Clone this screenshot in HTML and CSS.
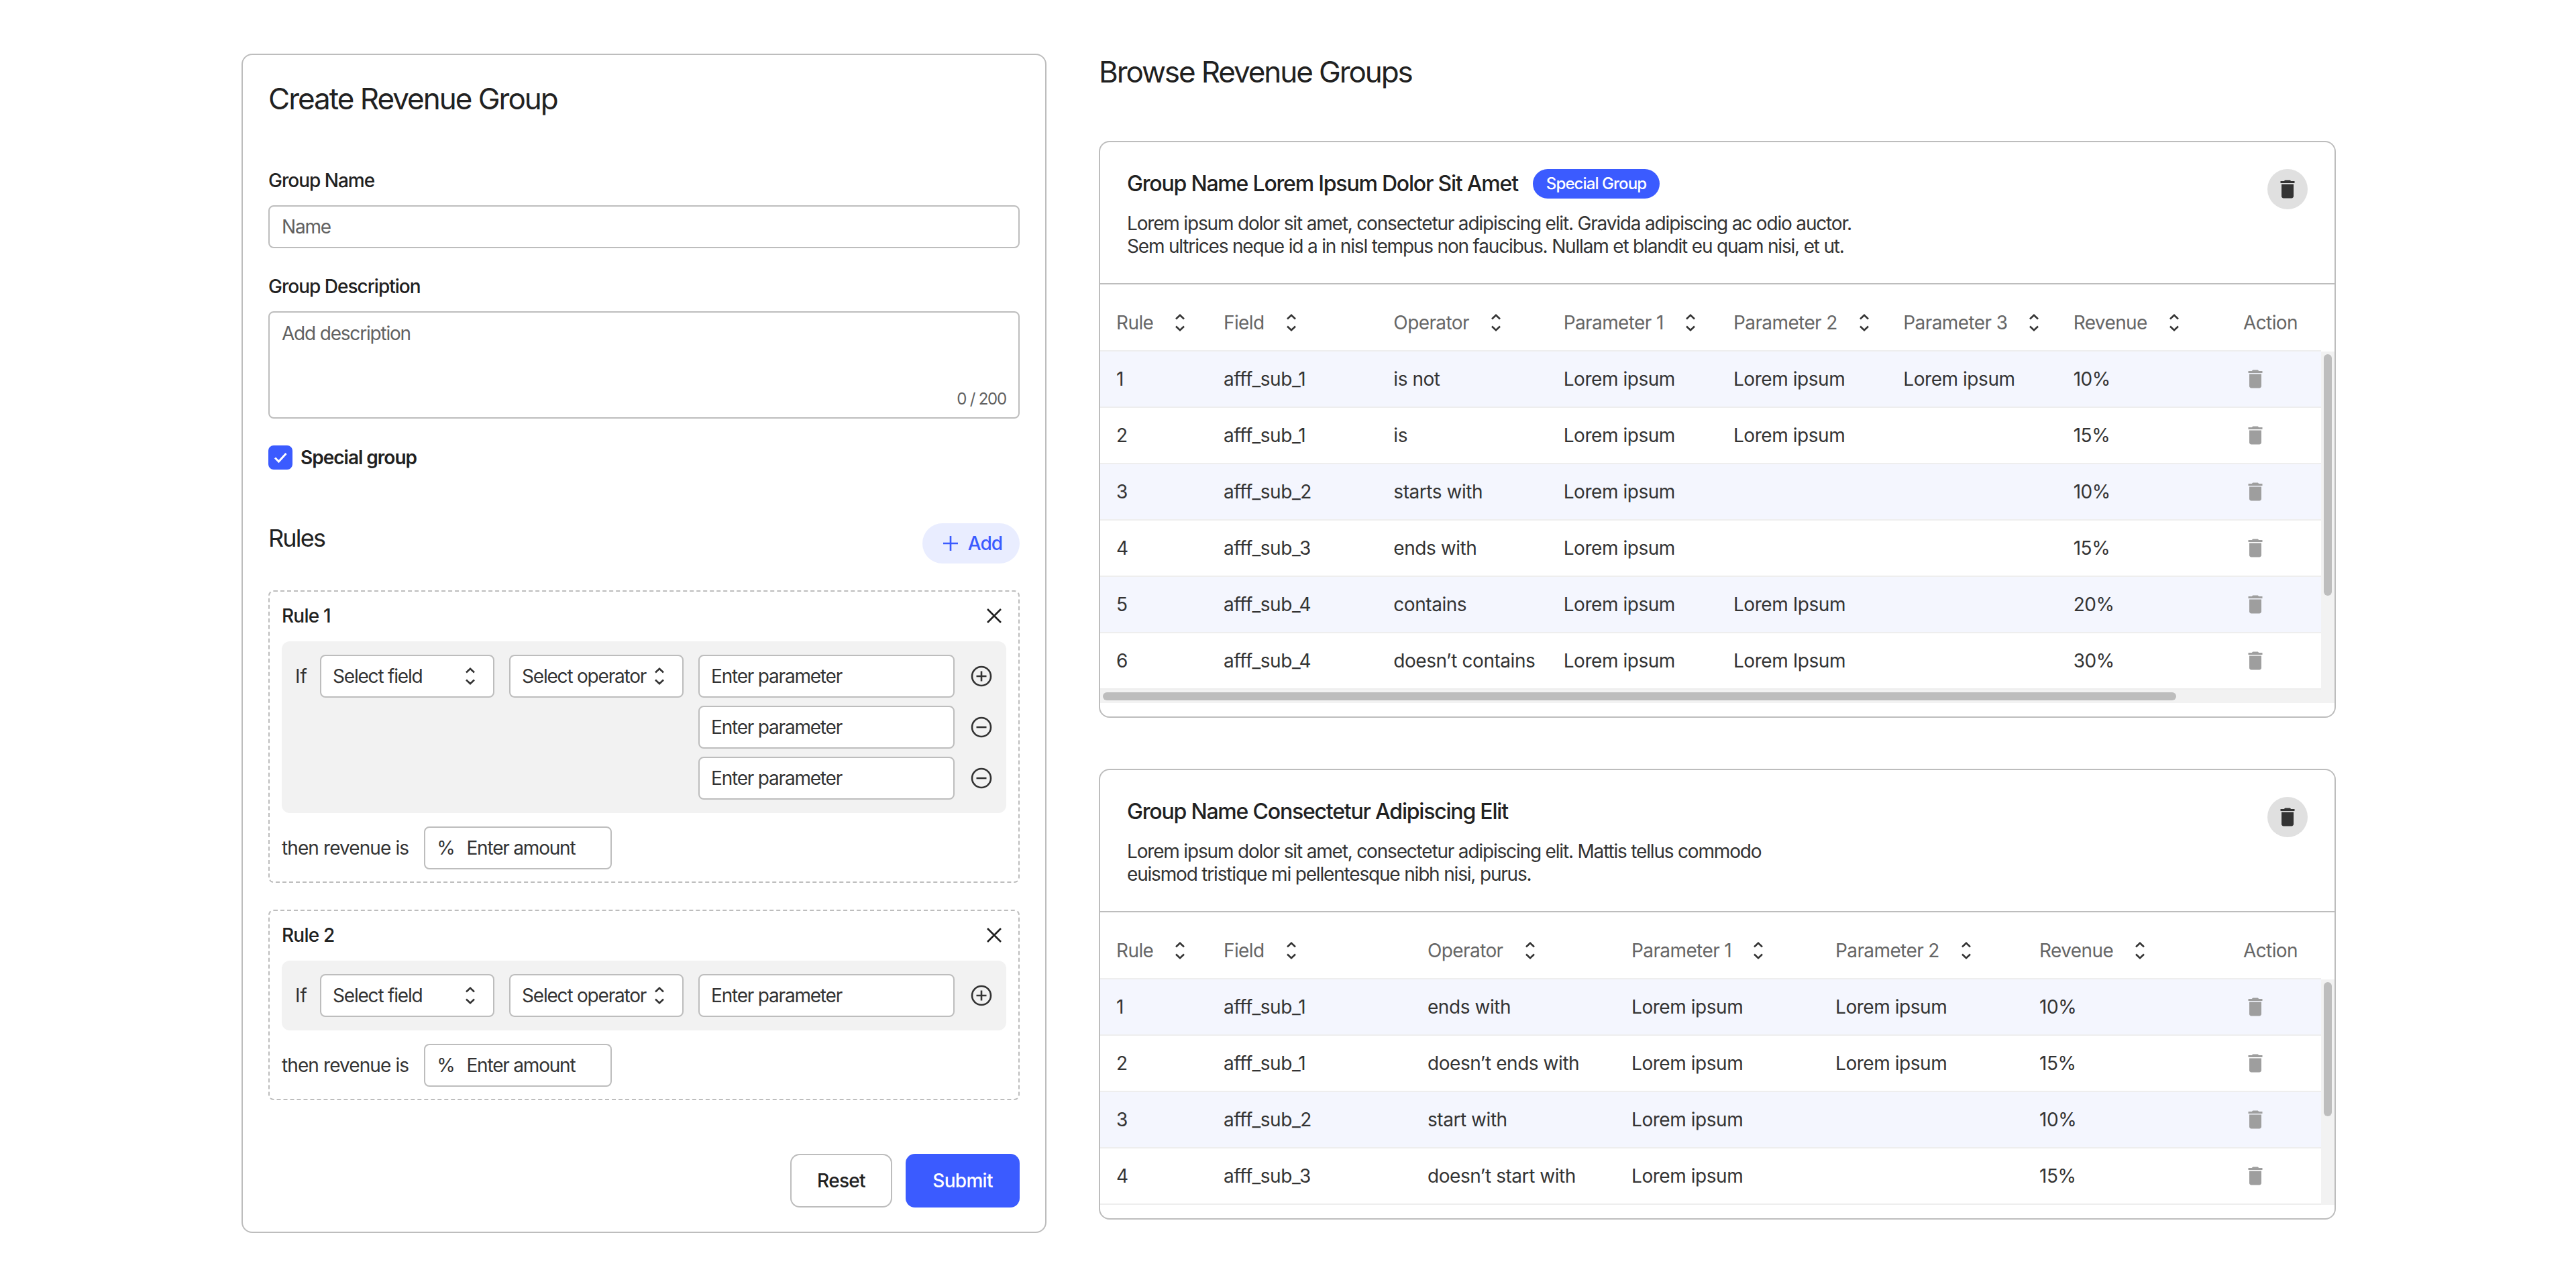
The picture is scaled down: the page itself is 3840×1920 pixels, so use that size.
FILE: index.html
```html
<!DOCTYPE html>
<html lang="en">
<head>
  <meta charset="UTF-8">
  <title>Revenue Groups</title>
  <link rel="stylesheet" href="styles.css">
</head>
<body>
<svg class="defs" width="0" height="0">
  <symbol id="sort" viewBox="0 0 32 32"><path d="M10 10.500 16 4.800l6 5.700M10 21.500 16 27.200l6-5.700" fill="none" stroke="currentColor" stroke-width="2.600"/></symbol>
  <symbol id="trash" viewBox="0 0 24 24"><path d="M6 19c0 1.100.9 2 2 2h8c1.100 0 2-.9 2-2V7H6v12zM19 4h-3.500l-1-1h-5l-1 1H5v2h14V4z" fill="currentColor"/></symbol>
  <symbol id="close" viewBox="0 0 36 36"><path d="M8 8l20 20M28 8 8 28" fill="none" stroke="currentColor" stroke-width="2.600"/></symbol>
  <symbol id="plus-circle" viewBox="0 0 36 36"><circle cx="18" cy="18" r="14" fill="none" stroke="currentColor" stroke-width="2.600"/><path d="M18 10.500v15M10.500 18h15" fill="none" stroke="currentColor" stroke-width="2.600"/></symbol>
  <symbol id="minus-circle" viewBox="0 0 36 36"><circle cx="18" cy="18" r="14" fill="none" stroke="currentColor" stroke-width="2.600"/><path d="M10.500 18h15" fill="none" stroke="currentColor" stroke-width="2.600"/></symbol>
</svg>

<div class="page">
  <!-- left: create form -->
  <form class="create-card">
    <h1 class="create-title">Create Revenue Group</h1>

    <div class="label">Group Name</div>
    <div class="field field-name">Name</div>

    <div class="label">Group Description</div>
    <div class="field field-area">
      <div>Add description</div>
      <div class="counter">0 / 200</div>
    </div>

    <div class="check-row">
      <span class="checkbox"><svg width="36" height="36" viewBox="0 0 36 36"><path d="M10 18.500l5.500 5.500L26.500 12" fill="none" stroke="#fff" stroke-width="3"/></svg></span>
      <span class="check-label">Special group</span>
    </div>

    <div class="rules-head">
      <h2 class="rules-title">Rules</h2>
      <div class="add-btn">
        <svg width="36" height="36" viewBox="0 0 36 36"><path d="M18 7v22M7 18h22" fill="none" stroke="currentColor" stroke-width="2.600"/></svg>
        <span>Add</span>
      </div>
    </div>

    <div class="rule">
      <div class="rule-head">
        <span class="rule-name">Rule 1</span>
        <svg class="rule-close" width="36" height="36"><use href="#close"/></svg>
      </div>
      <div class="rule-panel">
        <span>If</span>
        <div class="field select">Select field<svg width="32" height="32"><use href="#sort"/></svg></div>
        <div class="field select">Select operator<svg width="32" height="32"><use href="#sort"/></svg></div>
        <div class="field">Enter parameter</div>
        <svg class="round-icon" width="36" height="36"><use href="#plus-circle"/></svg>
        <div class="field param-col">Enter parameter</div>
        <svg class="round-icon" width="36" height="36"><use href="#minus-circle"/></svg>
        <div class="field param-col">Enter parameter</div>
        <svg class="round-icon" width="36" height="36"><use href="#minus-circle"/></svg>
      </div>
      <div class="revenue-row">
        <span class="revenue-label">then revenue is</span>
        <div class="field amount"><span>%</span><span>Enter amount</span></div>
      </div>
    </div>

    <div class="rule">
      <div class="rule-head">
        <span class="rule-name">Rule 2</span>
        <svg class="rule-close" width="36" height="36"><use href="#close"/></svg>
      </div>
      <div class="rule-panel">
        <span>If</span>
        <div class="field select">Select field<svg width="32" height="32"><use href="#sort"/></svg></div>
        <div class="field select">Select operator<svg width="32" height="32"><use href="#sort"/></svg></div>
        <div class="field">Enter parameter</div>
        <svg class="round-icon" width="36" height="36"><use href="#plus-circle"/></svg>
      </div>
      <div class="revenue-row">
        <span class="revenue-label">then revenue is</span>
        <div class="field amount"><span>%</span><span>Enter amount</span></div>
      </div>
    </div>

    <div class="form-actions">
      <div class="btn btn-reset">Reset</div>
      <div class="btn btn-submit">Submit</div>
    </div>
  </form>

  <!-- right: browse list -->
  <div class="browse">
    <h1 class="browse-title">Browse Revenue Groups</h1>

    <div class="group-card">
      <div class="group-head">
        <div>
          <div class="group-name-row">
            <span class="group-name">Group Name Lorem Ipsum Dolor Sit Amet</span>
            <span class="badge">Special Group</span>
          </div>
          <p class="group-desc">Lorem ipsum dolor sit amet, consectetur adipiscing elit. Gravida adipiscing ac odio auctor.<br>Sem ultrices neque id a in nisl tempus non faucibus. Nullam et blandit eu quam nisi, et ut.</p>
        </div>
        <div class="head-trash"><svg width="36" height="36"><use href="#trash"/></svg></div>
      </div>
      <div class="table-wrap">
        <div class="table-clip">
          <table>
            <thead>
              <tr>
                <th class="col-rule"><span class="th-in">Rule<svg width="32" height="32"><use href="#sort"/></svg></span></th>
                <th><span class="th-in">Field<svg width="32" height="32"><use href="#sort"/></svg></span></th>
                <th><span class="th-in">Operator<svg width="32" height="32"><use href="#sort"/></svg></span></th>
                <th><span class="th-in">Parameter 1<svg width="32" height="32"><use href="#sort"/></svg></span></th>
                <th><span class="th-in">Parameter 2<svg width="32" height="32"><use href="#sort"/></svg></span></th>
                <th><span class="th-in">Parameter 3<svg width="32" height="32"><use href="#sort"/></svg></span></th>
                <th><span class="th-in">Revenue<svg width="32" height="32"><use href="#sort"/></svg></span></th>
                <th class="col-action">Action</th>
              </tr>
            </thead>
            <tbody>
              <tr><td>1</td><td>afff_sub_1</td><td>is not</td><td>Lorem ipsum</td><td>Lorem ipsum</td><td>Lorem ipsum</td><td>10%</td><td class="act"><svg width="36" height="36"><use href="#trash"/></svg></td></tr>
              <tr><td>2</td><td>afff_sub_1</td><td>is</td><td>Lorem ipsum</td><td>Lorem ipsum</td><td></td><td>15%</td><td class="act"><svg width="36" height="36"><use href="#trash"/></svg></td></tr>
              <tr><td>3</td><td>afff_sub_2</td><td>starts with</td><td>Lorem ipsum</td><td></td><td></td><td>10%</td><td class="act"><svg width="36" height="36"><use href="#trash"/></svg></td></tr>
              <tr><td>4</td><td>afff_sub_3</td><td>ends with</td><td>Lorem ipsum</td><td></td><td></td><td>15%</td><td class="act"><svg width="36" height="36"><use href="#trash"/></svg></td></tr>
              <tr><td>5</td><td>afff_sub_4</td><td>contains</td><td>Lorem ipsum</td><td>Lorem Ipsum</td><td></td><td>20%</td><td class="act"><svg width="36" height="36"><use href="#trash"/></svg></td></tr>
              <tr><td>6</td><td>afff_sub_4</td><td>doesn’t contains</td><td>Lorem ipsum</td><td>Lorem Ipsum</td><td></td><td>30%</td><td class="act"><svg width="36" height="36"><use href="#trash"/></svg></td></tr>
            </tbody>
          </table>
        </div>
        <div class="vtrack"><div class="vthumb vthumb-long"></div></div>
      </div>
      <div class="htrack"><div class="hthumb"></div></div>
    </div>

    <div class="group-card">
      <div class="group-head">
        <div>
          <div class="group-name-row">
            <span class="group-name">Group Name Consectetur Adipiscing Elit</span>
          </div>
          <p class="group-desc">Lorem ipsum dolor sit amet, consectetur adipiscing elit. Mattis tellus commodo<br>euismod tristique mi pellentesque nibh nisi, purus.</p>
        </div>
        <div class="head-trash"><svg width="36" height="36"><use href="#trash"/></svg></div>
      </div>
      <div class="table-wrap">
        <div class="table-clip">
          <table>
            <thead>
              <tr>
                <th class="col-rule"><span class="th-in">Rule<svg width="32" height="32"><use href="#sort"/></svg></span></th>
                <th><span class="th-in">Field<svg width="32" height="32"><use href="#sort"/></svg></span></th>
                <th><span class="th-in">Operator<svg width="32" height="32"><use href="#sort"/></svg></span></th>
                <th><span class="th-in">Parameter 1<svg width="32" height="32"><use href="#sort"/></svg></span></th>
                <th><span class="th-in">Parameter 2<svg width="32" height="32"><use href="#sort"/></svg></span></th>
                <th><span class="th-in">Revenue<svg width="32" height="32"><use href="#sort"/></svg></span></th>
                <th class="col-action">Action</th>
              </tr>
            </thead>
            <tbody>
              <tr><td>1</td><td>afff_sub_1</td><td>ends with</td><td>Lorem ipsum</td><td>Lorem ipsum</td><td>10%</td><td class="act"><svg width="36" height="36"><use href="#trash"/></svg></td></tr>
              <tr><td>2</td><td>afff_sub_1</td><td>doesn’t ends with</td><td>Lorem ipsum</td><td>Lorem ipsum</td><td>15%</td><td class="act"><svg width="36" height="36"><use href="#trash"/></svg></td></tr>
              <tr><td>3</td><td>afff_sub_2</td><td>start with</td><td>Lorem ipsum</td><td></td><td>10%</td><td class="act"><svg width="36" height="36"><use href="#trash"/></svg></td></tr>
              <tr><td>4</td><td>afff_sub_3</td><td>doesn’t start with</td><td>Lorem ipsum</td><td></td><td>15%</td><td class="act"><svg width="36" height="36"><use href="#trash"/></svg></td></tr>
            </tbody>
          </table>
        </div>
        <div class="vtrack"><div class="vthumb vthumb-short"></div></div>
      </div>
      <div class="card-foot"></div>
    </div>
  </div>
</div>
</body>
</html>
```
FILE: styles.css
```css
* {
  box-sizing: border-box;
}

body {
  margin: 0;
  background: #fff;
  color: #333;
  font-family: Inter, "Liberation Sans", sans-serif;
  font-size: 28px;
  line-height: 34px;
}

h1, h2, p {
  margin: 0;
  font-weight: 400;
}

svg {
  display: block;
  flex: none;
}

.defs {
  position: absolute;
}

.page {
  display: flex;
  gap: 78px;
  padding: 80px 358px 0 360px;
}

/* create form */
.create-card {
  width: 1200px;
  flex: none;
  height: 1758px;
  padding: 40px 38px;
  border: 2px solid #bdbdbd;
  border-radius: 16px;
}

.create-title {
  font-size: 44px;
  line-height: 50px;
  letter-spacing: -2px;
  color: #212121;
  margin-bottom: 80px;
}

.label {
  font-weight: 500;
  letter-spacing: -1px;
  color: #212121;
  margin-bottom: 20px;
}

.field {
  display: flex;
  align-items: center;
  height: 64px;
  padding: 0 18px;
  background: #fff;
  border: 2px solid #bdbdbd;
  border-radius: 8px;
  letter-spacing: -1.200px;
  white-space: nowrap;
}

.rule .field {
  padding-left: 17px;
}

.field-name {
  color: #616161;
  margin-bottom: 40px;
}

.field-area {
  flex-direction: column;
  align-items: stretch;
  justify-content: space-between;
  height: 160px;
  padding: 14px 18px 10px;
  color: #616161;
}

.counter {
  font-size: 24px;
  letter-spacing: -1.200px;
  text-align: right;
}

.check-row {
  display: flex;
  align-items: center;
  gap: 12px;
  margin-top: 40px;
}

.checkbox {
  width: 36px;
  height: 36px;
  background: #3b5bff;
  border-radius: 8px;
}

.check-label {
  font-weight: 600;
  letter-spacing: -1px;
  color: #212121;
}

.rules-head {
  display: flex;
  justify-content: space-between;
  align-items: flex-start;
  margin: 80px 0 40px;
}

.rules-title {
  font-size: 36px;
  line-height: 44px;
  letter-spacing: -1.800px;
  color: #212121;
}

.add-btn {
  display: flex;
  align-items: center;
  gap: 8px;
  height: 60px;
  padding: 0 26px 0 24px;
  background: #e9edff;
  border-radius: 30px;
  color: #3b5bff;
  font-weight: 500;
  letter-spacing: -1px;
}

.rule {
  padding: 18px;
  margin-bottom: 40px;
  border: 2px dashed #bdbdbd;
  border-radius: 8px;
}

.rule-head {
  display: flex;
  justify-content: space-between;
  align-items: center;
  height: 36px;
  margin-bottom: 20px;
}

.rule-name {
  font-weight: 500;
  letter-spacing: -0.800px;
  color: #212121;
}

.rule-close {
  color: #212121;
}

.rule-panel {
  display: grid;
  grid-template-columns: 15px 260px 260px 382px 36px;
  column-gap: 22px;
  row-gap: 12px;
  align-items: center;
  padding: 20px;
  background: #f2f2f2;
  border-radius: 12px;
}

.param-col {
  grid-column: 4;
}

.select {
  justify-content: space-between;
}

.round-icon {
  color: #333;
}

.revenue-row {
  display: flex;
  align-items: center;
  gap: 23px;
  margin-top: 20px;
}

.revenue-label {
  letter-spacing: -0.900px;
}

.amount {
  width: 280px;
  gap: 18px;
}

.form-actions {
  display: flex;
  justify-content: flex-end;
  gap: 20px;
  margin-top: 80px;
}

.btn {
  display: flex;
  align-items: center;
  justify-content: center;
  height: 80px;
  border-radius: 14px;
  font-weight: 500;
  letter-spacing: -0.700px;
}

.btn-reset {
  width: 152px;
  border: 2px solid #bdbdbd;
  color: #212121;
}

.btn-submit {
  width: 170px;
  background: #3b5bff;
  color: #fff;
}

/* browse list */
.browse {
  width: 1844px;
  flex: none;
}

.browse-title {
  font-size: 44px;
  line-height: 54px;
  letter-spacing: -2.100px;
  color: #212121;
  margin-bottom: 76px;
}

.group-card {
  margin-bottom: 76px;
  border: 2px solid #bdbdbd;
  border-radius: 16px;
  overflow: hidden;
}

.group-head {
  display: flex;
  justify-content: space-between;
  align-items: flex-start;
  padding: 40px 40px 38px;
  border-bottom: 2px solid #bdbdbd;
}

.group-name-row {
  display: flex;
  align-items: center;
  gap: 22px;
  height: 44px;
  margin-bottom: 20px;
}

.group-name {
  font-size: 32px;
  font-weight: 500;
  letter-spacing: -1.200px;
  color: #212121;
}

.badge {
  display: flex;
  align-items: center;
  height: 44px;
  padding: 0 20px;
  background: #3b5bff;
  border-radius: 22px;
  color: #fff;
  font-size: 24px;
  font-weight: 500;
  letter-spacing: -0.900px;
}

.group-desc {
  letter-spacing: -1.180px;
  color: #333;
}

.head-trash {
  display: flex;
  align-items: center;
  justify-content: center;
  width: 60px;
  height: 60px;
  background: #e0e0e0;
  border-radius: 50%;
  color: #333;
}

.table-wrap {
  display: flex;
}

.table-clip {
  flex: 1;
  padding-top: 16px;
}

table {
  width: 100%;
  table-layout: fixed;
  border-collapse: separate;
  border-spacing: 0;
}

th, td {
  padding: 0 0 0 24px;
  text-align: left;
  font-weight: 400;
  border-bottom: 2px solid #eee;
  white-space: nowrap;
}

th {
  height: 84px;
  color: #666;
  letter-spacing: -0.600px;
}

td {
  height: 84px;
  letter-spacing: -0.450px;
}

.col-rule {
  width: 160px;
}

.col-action {
  width: 140px;
}

.th-in {
  display: flex;
  align-items: center;
  gap: 24px;
}

.th-in svg {
  color: #333;
}

tbody tr:nth-child(odd) td {
  background: #f4f6fe;
}

.act {
  color: #9e9e9e;
}

.vtrack {
  width: 20px;
  margin-top: 100px;
  padding: 4px 4px 0;
  background: #f2f2f2;
}

.vthumb {
  background: #bdbdbd;
  border-radius: 6px;
}

.vthumb-long {
  height: 360px;
}

.vthumb-short {
  height: 200px;
}

.htrack {
  height: 20px;
  margin-bottom: 20px;
  padding: 4px;
  background: #f2f2f2;
}

.hthumb {
  width: 1600px;
  height: 12px;
  background: #bdbdbd;
  border-radius: 6px;
}

.card-foot {
  height: 20px;
}
```
